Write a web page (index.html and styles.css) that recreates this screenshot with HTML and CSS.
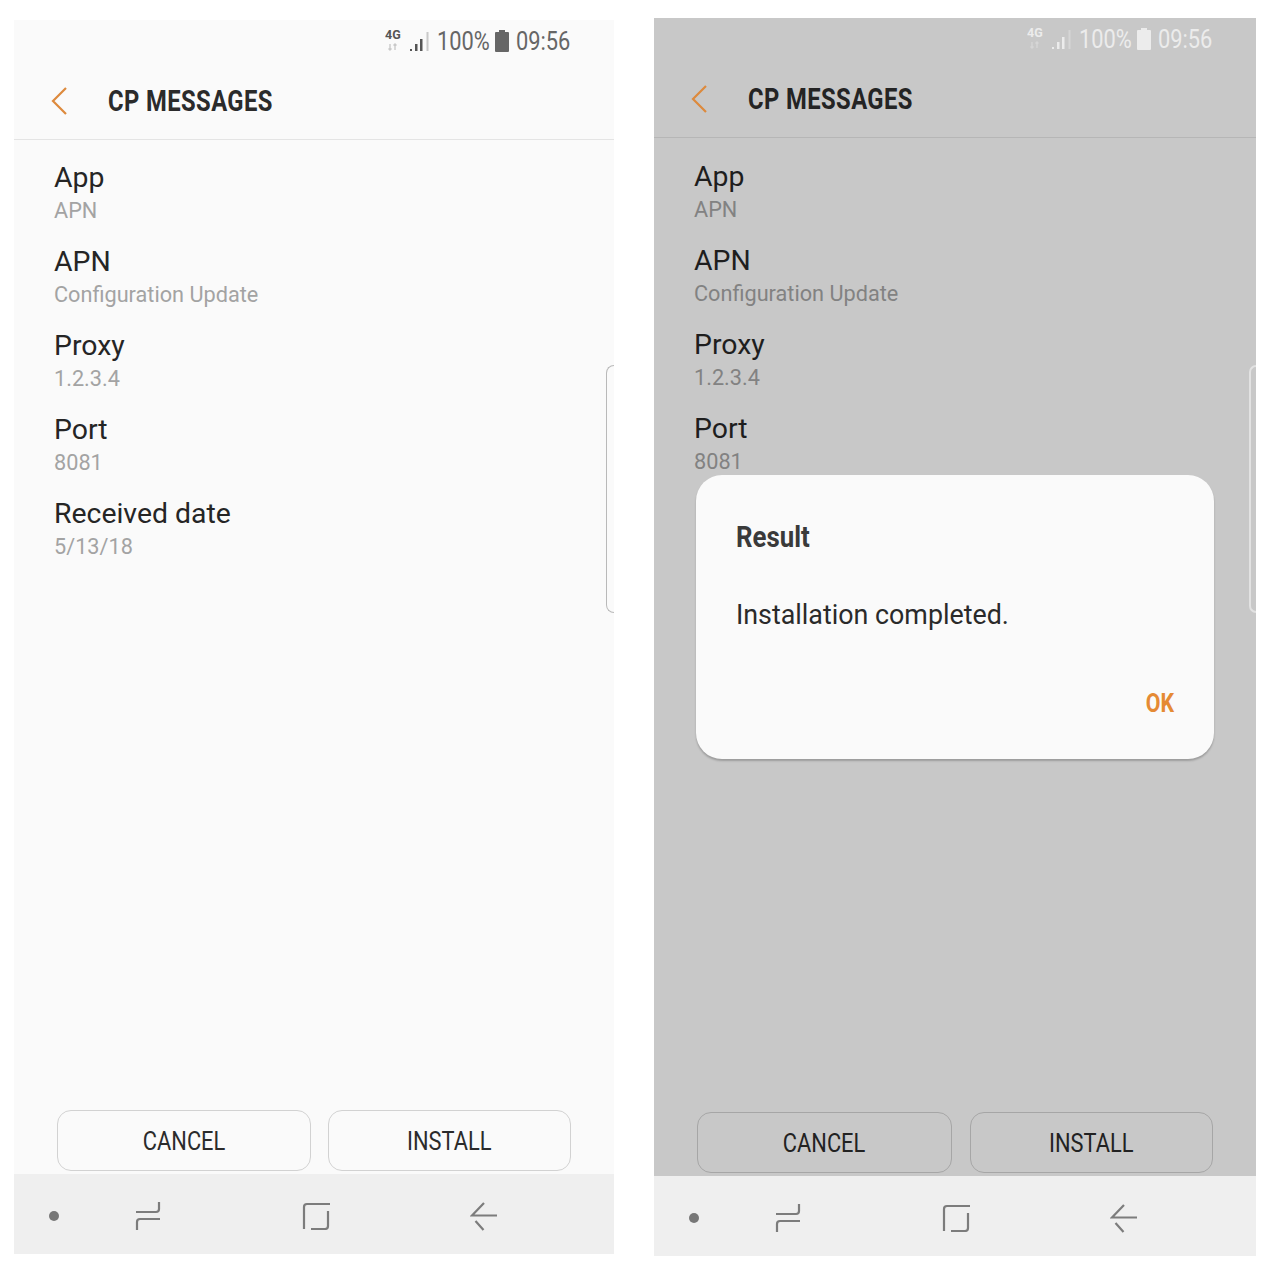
FILE: index.html
```html
<!DOCTYPE html>
<html lang="en">
<head>
<meta charset="utf-8">
<title>CP Messages</title>
<link rel="stylesheet" href="styles.css">
</head>
<body>
<main class="screens">
  <section class="phone phone-light">
    <div class="status">
      <svg class="ic-net" viewBox="0 -6 46 30" width="46" height="30"><text x="0" y="9.500" class="net-text">4G</text><path class="net-arrow" d="M5 15v6M3.500 19.500 5 21l1.500-1.500M10 21v-6M8.500 16.500 10 15l1.500 1.500"/><path class="net-bars" d="M25 22h2v-2h-2zM30 22h2.500v-7H30zM35 22h2.500V10H35z"/><path class="net-bar-off" d="M41.500 22h2V3h-2z"/></svg>
      <span class="status-pct">100%</span>
      <svg class="ic-batt" viewBox="0 0 14 22" width="14" height="22"><path class="batt" d="M4 0h6v2h3a1 1 0 0 1 1 1v18a1 1 0 0 1-1 1H1a1 1 0 0 1-1-1V3a1 1 0 0 1 1-1h3z"/></svg>
      <span class="status-time">09:56</span>
    </div>
    <header class="head">
      <svg class="ic-back" viewBox="0 0 18 30" width="18" height="30"><path d="M16 2 3 15l13 13"/></svg>
      <h1 class="title">CP MESSAGES</h1>
    </header>
    <dl class="list">
      <div class="row"><dt>App</dt><dd>APN</dd></div>
      <div class="row"><dt>APN</dt><dd>Configuration Update</dd></div>
      <div class="row"><dt>Proxy</dt><dd>1.2.3.4</dd></div>
      <div class="row"><dt>Port</dt><dd>8081</dd></div>
      <div class="row"><dt>Received date</dt><dd>5/13/18</dd></div>
    </dl>
    <div class="actions">
      <button class="btn btn-cancel"><span>CANCEL</span></button>
      <button class="btn btn-install"><span>INSTALL</span></button>
    </div>
    <nav class="nav">
      <i class="nav-dot"></i>
      <span class="nav-slot"><svg class="nav-ic" viewBox="0 0 28 30" width="28" height="30"><path d="M2 11h20q3 0 3-3V1M26 18H6q-3 0-3 3v8"/></svg></span>
      <span class="nav-slot"><svg class="nav-ic" viewBox="0 0 28 28" width="28" height="28"><path d="M2 27V5q0-3 3-3h23M26 9v15q0 3-3 3H9"/></svg></span>
      <span class="nav-slot"><svg class="nav-ic" viewBox="0 0 28 30" width="28" height="30"><path d="M14 2 2 14.500h25M5.500 20l8 9"/></svg></span>
    </nav>
    <div class="edge"></div>
  </section>

  <section class="phone phone-dim">
    <div class="status">
      <svg class="ic-net" viewBox="0 -6 46 30" width="46" height="30"><text x="0" y="9.500" class="net-text">4G</text><path class="net-arrow" d="M5 15v6M3.500 19.500 5 21l1.500-1.500M10 21v-6M8.500 16.500 10 15l1.500 1.500"/><path class="net-bars" d="M25 22h2v-2h-2zM30 22h2.500v-7H30zM35 22h2.500V10H35z"/><path class="net-bar-off" d="M41.500 22h2V3h-2z"/></svg>
      <span class="status-pct">100%</span>
      <svg class="ic-batt" viewBox="0 0 14 22" width="14" height="22"><path class="batt" d="M4 0h6v2h3a1 1 0 0 1 1 1v18a1 1 0 0 1-1 1H1a1 1 0 0 1-1-1V3a1 1 0 0 1 1-1h3z"/></svg>
      <span class="status-time">09:56</span>
    </div>
    <header class="head">
      <svg class="ic-back" viewBox="0 0 18 30" width="18" height="30"><path d="M16 2 3 15l13 13"/></svg>
      <h1 class="title">CP MESSAGES</h1>
    </header>
    <dl class="list">
      <div class="row"><dt>App</dt><dd>APN</dd></div>
      <div class="row"><dt>APN</dt><dd>Configuration Update</dd></div>
      <div class="row"><dt>Proxy</dt><dd>1.2.3.4</dd></div>
      <div class="row"><dt>Port</dt><dd>8081</dd></div>
    </dl>
    <div class="actions">
      <button class="btn btn-cancel"><span>CANCEL</span></button>
      <button class="btn btn-install"><span>INSTALL</span></button>
    </div>
    <nav class="nav">
      <i class="nav-dot"></i>
      <span class="nav-slot"><svg class="nav-ic" viewBox="0 0 28 30" width="28" height="30"><path d="M2 11h20q3 0 3-3V1M26 18H6q-3 0-3 3v8"/></svg></span>
      <span class="nav-slot"><svg class="nav-ic" viewBox="0 0 28 28" width="28" height="28"><path d="M2 27V5q0-3 3-3h23M26 9v15q0 3-3 3H9"/></svg></span>
      <span class="nav-slot"><svg class="nav-ic" viewBox="0 0 28 30" width="28" height="30"><path d="M14 2 2 14.500h25M5.500 20l8 9"/></svg></span>
    </nav>
    <div class="edge"></div>
    <div class="dialog" role="dialog">
      <h2 class="dialog-title">Result</h2>
      <p class="dialog-body">Installation completed.</p>
      <div class="dialog-ok">OK</div>
    </div>
  </section>
</main>
</body>
</html>
```

FILE: styles.css
```css
* { box-sizing: border-box; }
html, body { margin: 0; padding: 0; background: #fff; }
body { font-family: Roboto, "Noto Sans", sans-serif; }

.screens { display: flex; width: 1266px; height: 1274px; padding-left: 14px; gap: 40px; }

.phone { position: relative; display: flex; flex-direction: column; overflow: hidden; }
.phone-light { width: 600px; height: 1234px; margin-top: 20px; background: #fafafa; color: #252525; --sub: #a3a3a3; --rule: #e4e4e4; --status: #666; --net: #555; --net2: #c9c9c9; --btn-line: #d2d2d2; --edge: #b9b9b9; }
.phone-dim { width: 602px; height: 1238px; margin-top: 18px; background: #c8c8c8; color: #1e1e1e; --sub: #828282; --rule: #b6b6b6; --status: #ececec; --net: #ececec; --net2: #d6d6d6; --btn-line: #a6a6a6; --edge: #e2e2e2; }

/* status bar */
.status { display: flex; align-items: center; justify-content: flex-end; height: 42px; padding-right: 43px; color: var(--status); font-size: 26px; }
.ic-net { margin: 0 6px 0 0; position: relative; top: -3px; }
.net-text { font: 700 12.5px Roboto, sans-serif; fill: var(--net); }
.net-arrow { fill: none; stroke: var(--net2); stroke-width: 1.4; }
.net-bars { fill: var(--net); }
.net-bar-off { fill: var(--net2); }
.status-pct, .status-time { display: block; white-space: nowrap; transform: scaleX(.84); transform-origin: left center; line-height: 42px; }
.status-pct { width: 52px; margin-right: 6px; }
.status-time { width: 55px; }
.batt { fill: var(--status); }
.ic-batt { margin-right: 7px; }

/* title bar */
.head { display: flex; align-items: center; height: 78px; padding-left: 36px; border-bottom: 1px solid var(--rule); }
.ic-back { flex: none; }
.ic-back path { fill: none; stroke: #dd8a3d; stroke-width: 2.2; }
.title { margin: 2px 0 0 40px; font-size: 29px; font-weight: 700; letter-spacing: .5px; white-space: nowrap; transform: scaleX(.82); transform-origin: left center; color: #2b2b2b; line-height: 1; }
.phone-dim .title { color: #242424; }

/* rows */
.list { flex: 1; margin: 0; padding: 18px 0 0 40px; }
.phone-dim .list { padding-top: 19px; }
.row { height: 84px; }
.row dt { font-size: 28.4px; line-height: 40px; }
.row dd { margin: -1px 0 0; font-size: 21.7px; line-height: 28px; color: var(--sub); }

/* buttons */
.actions { display: flex; gap: 17px; padding: 0 0 3px 43px; height: 64px; }
.btn { height: 61px; padding: 0; background: transparent; border: 1.5px solid var(--btn-line); border-radius: 14px; color: #2b2b2b; font: 400 26px Roboto, sans-serif; }
.btn span { display: inline-block; transform: scaleX(.84); }
.btn-cancel { width: 254px; flex: none; }
.btn-install { width: 243px; flex: none; }
.phone-dim .btn { color: #222; }
.phone-dim .actions { gap: 18px; }
.phone-dim .btn-cancel { width: 255px; }

/* nav */
.nav { display: flex; align-items: center; height: 80px; padding-top: 4px; background: #efefef; flex: none; }
.nav-dot { width: 10px; height: 10px; margin: 0 5.500px 0 34.500px; border-radius: 50%; background: #777; flex: none; }
.nav-slot { display: flex; justify-content: center; width: 168px; }
.nav-ic { fill: none; stroke: #7c7c7c; stroke-width: 2.2; }

/* edge panel handle */
.edge { position: absolute; right: 0; top: 345px; width: 8px; height: 248px; border: 1px solid var(--edge); border-right: 0; border-radius: 8px 0 0 8px; }
.phone-dim .edge { top: 347px; width: 7px; border-width: 2px; border-right: 0; }

/* dialog */
.dialog { position: absolute; left: 42px; top: 457px; width: 518px; height: 284px; display: flex; flex-direction: column; padding: 42px 40px 0 40px; background: #fafafa; border-radius: 26px; box-shadow: 0 2px 2px rgba(0,0,0,.22); color: #2a2a2a; }
.dialog-title { margin: 0; font-size: 30px; line-height: 40px; font-weight: 700; width: 100px; white-space: nowrap; transform: scaleX(.86); transform-origin: left center; color: #3a3a3a; }
.dialog-body { margin: 38px 0 0; font-size: 28px; line-height: 40px; white-space: nowrap; transform: scaleX(.958); transform-origin: left center; }
.dialog-ok { margin-top: 48px; text-align: right; font-size: 26px; line-height: 40px; font-weight: 700; color: #e58a34; transform: scaleX(.82); transform-origin: right center; }
```
